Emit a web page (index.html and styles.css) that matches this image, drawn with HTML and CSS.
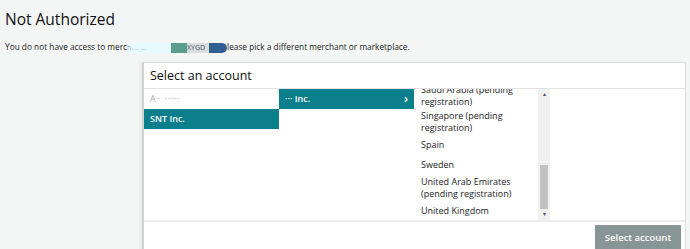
FILE: index.html
```html
<!DOCTYPE html>
<html lang="en">
<head>
    <meta charset="UTF-8">
    <title>Not Authorized</title>
    <link rel="stylesheet" href="styles.css">
</head>
<body>

<div class="page">
    <h1>Not Authorized</h1>
    <p class="notice">You do not have access to merc<span class="mask mask-cyan">h. .. ...</span><span class="mask mask-teal"></span><span class="mask mask-grey">XYGD</span><span class="mask mask-blue"></span>lease pick a different merchant or marketplace.</p>

    <!-- Выбор аккаунта -->
    <div class="picker">
        <div class="picker-head">Select an account</div>

        <div class="picker-body">
            <ul class="col">
                <li class="faded">A&middot;&middot; &nbsp;&middot;&middot;&middot;&middot;&middot;&middot;</li>
                <li class="active">SNT Inc.</li>
            </ul>
            <ul class="col">
                <li class="active">&middot;&middot;&middot; Inc.<span class="chevron">&rsaquo;</span></li>
            </ul>
            <div class="col col-scroll">
                <ul class="market-list">
                    <li class="two">Saudi Arabia (pending registration)</li>
                    <li class="two">Singapore (pending registration)</li>
                    <li>Spain</li>
                    <li>Sweden</li>
                    <li class="two">United Arab Emirates (pending registration)</li>
                    <li class="last">United Kingdom</li>
                </ul>
                <div class="scrollbar">
                    <span class="arrow">&#9652;</span>
                    <div class="track"><div class="thumb"></div></div>
                    <span class="arrow">&#9662;</span>
                </div>
            </div>
            <div class="col col-empty"></div>
        </div>

        <div class="picker-foot">
            <button class="select-btn">Select account</button>
        </div>
    </div>
</div>

</body>
</html>
```

FILE: styles.css
```css
body {
    margin: 0;
    padding: 0;
    background: #f4f6f6;
    font-family: "Open Sans", Arial, sans-serif;
    color: #111;
    overflow: hidden;
}
.page {
    padding: 0 4px 0 5px;
}
h1 {
    margin: 0;
    padding-top: 9px;
    font-size: 15.5px;
    font-weight: 400;
    line-height: 20px;
}
.notice {
    margin: 12px 0 0;
    font-size: 8.3px;
    line-height: 12px;
    color: #222;
}
.mask {
    display: inline-block;
    height: 10px;
    vertical-align: middle;
}
.mask-cyan {
    width: 44px;
    background: #e6fbfd;
    color: #9ab;
    font-size: 7px;
    line-height: 10px;
}
.mask-teal {
    width: 16px;
    background: #5c9e8c;
}
.mask-grey {
    width: 22px;
    background: #d8dedd;
    color: #556;
    font-size: 7px;
    line-height: 10px;
}
.mask-blue {
    width: 18px;
    background: #2f5f93;
    border-radius: 0 5px 5px 0;
}
.picker {
    margin: 9px 0 0 137px;
    height: 200px;
    background: #fff;
    border: 1px solid #dcdcdc;
    border-left: 2px solid #cfd3d3;
    box-shadow: -2px 0 3px rgba(0,0,0,0.06);
}
.picker-head {
    height: 25px;
    padding-left: 6px;
    font-size: 12.5px;
    line-height: 25px;
    border-bottom: 1px solid #e2e2e2;
}
.picker-body {
    display: flex;
    height: 131px;
    border-bottom: 2px solid #ececec;
}
.col {
    width: 135px;
    margin: 0;
    padding: 0;
    list-style: none;
}
.col li {
    height: 20px;
    padding: 0 6px;
    font-size: 9px;
    line-height: 20px;
    position: relative;
}
.col li.faded {
    color: #aab;
}
.col li.active {
    background: #0b7f8c;
    color: #fff;
    font-weight: 600;
}
.chevron {
    position: absolute;
    right: 6px;
    top: 0;
    font-size: 12px;
}
.col-scroll {
    width: 136px;
    display: flex;
}
.market-list {
    flex: 1;
    margin: 0;
    padding: 0;
    list-style: none;
    display: flex;
    flex-direction: column;
    justify-content: flex-end;
    overflow: hidden;
}
.market-list li {
    flex-shrink: 0;
    height: auto;
    padding: 4px 6px 4px 7px;
    font-size: 9px;
    line-height: 12px;
    color: #222;
}
.market-list li.two {
    padding-top: 1px;
    padding-bottom: 1px;
}
.market-list li.last {
    padding-bottom: 3px;
}
.scrollbar {
    width: 12px;
    display: flex;
    flex-direction: column;
    background: #f1f1f1;
}
.arrow {
    height: 11px;
    font-size: 6px;
    line-height: 11px;
    text-align: center;
    color: #505050;
}
.track {
    flex: 1;
    display: flex;
    flex-direction: column;
    justify-content: flex-end;
    padding: 0 2px;
}
.thumb {
    height: 44px;
    background: #c1c1c1;
}
.col-empty {
    flex: 1;
}
.picker-foot {
    display: flex;
    justify-content: flex-end;
    padding: 3px 4px 0 0;
}
.select-btn {
    width: 86px;
    height: 25px;
    background: #879596;
    color: #fff;
    border: none;
    border-radius: 1px;
    font-family: "Open Sans", Arial, sans-serif;
    font-size: 9.5px;
    font-weight: 600;
    padding: 0;
}
```
